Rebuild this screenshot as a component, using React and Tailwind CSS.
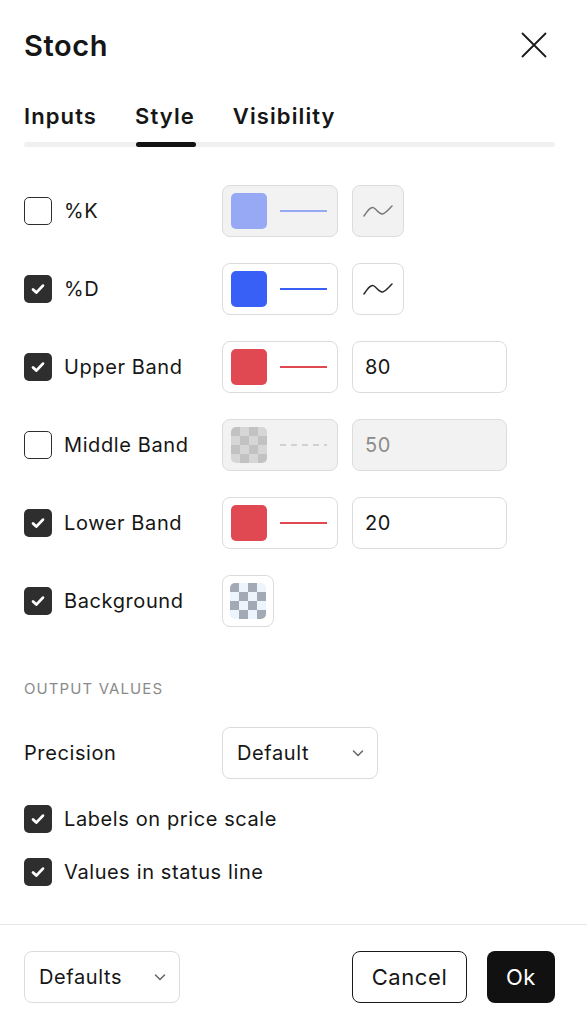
import React from "react";

const font = { fontFamily: "Inter, 'Noto Sans', sans-serif" };

function Check({ checked }) {
  if (!checked) {
    return <div className="w-[28px] h-[28px] rounded-[5px] border-[1.5px] border-[#2e2e2e] bg-white shrink-0" />;
  }
  return (
    <div className="w-[28px] h-[28px] rounded-[5px] bg-[#2e2e2e] flex items-center justify-center shrink-0">
      <svg width="18" height="18" viewBox="0 0 16 16" fill="none">
        <path d="M3.6 8.4l2.9 2.8 5.9-6.2" stroke="white" strokeWidth="2.5" strokeLinecap="round" strokeLinejoin="round" />
      </svg>
    </div>
  );
}

function Checker({ light, dark }) {
  const cells = [];
  for (let r = 0; r < 4; r++) {
    for (let c = 0; c < 4; c++) {
      cells.push(
        <div key={r * 4 + c} style={{ background: (r + c) % 2 === 0 ? dark : light }} />
      );
    }
  }
  return <div className="w-[36px] h-[36px] rounded-[5px] overflow-hidden grid grid-cols-4 grid-rows-4">{cells}</div>;
}

function ColorButton({ color, line, disabled, dashed }) {
  return (
    <div
      className={
        "w-[116px] h-[52px] rounded-[8px] border border-[#dcdcdc] flex items-center pl-[8px] gap-[13px] " +
        (disabled ? "bg-[#f2f2f2]" : "bg-white")
      }
    >
      {color ? (
        <div className="w-[36px] h-[36px] rounded-[5px]" style={{ background: color }} />
      ) : (
        <Checker light="#d6d6d6" dark="#c2c2c2" />
      )}
      {dashed ? (
        <svg width="47" height="2" viewBox="0 0 47 2">
          <line x1="0" y1="1" x2="47" y2="1" stroke="#c6c6c6" strokeWidth="1.5" strokeDasharray="6 5" />
        </svg>
      ) : (
        <div className="w-[47px] h-[1.5px]" style={{ background: line }} />
      )}
    </div>
  );
}

function Wave({ disabled }) {
  return (
    <div
      className={
        "w-[52px] h-[52px] rounded-[8px] border border-[#dcdcdc] flex items-center justify-center " +
        (disabled ? "bg-[#f2f2f2]" : "bg-white")
      }
    >
      <svg width="30" height="14" viewBox="0 0 30 14" fill="none">
        <path
          d="M1 12 C5 6 8 2 11 4 C14 6 16 10 19 10 C22 10 25 6 29 2"
          stroke={disabled ? "#7a7a7a" : "#2a2a2a"}
          strokeWidth="1.5"
          strokeLinecap="round"
          strokeLinejoin="round"
        />
      </svg>
    </div>
  );
}

function NumInput({ value, disabled }) {
  return (
    <div
      className={
        "w-[155px] h-[52px] rounded-[8px] border border-[#dcdcdc] flex items-center px-[12px] text-[20px] tracking-[0.5px] " +
        (disabled ? "bg-[#f2f2f2] text-[#8c8c8c]" : "bg-white text-[#161616]")
      }
    >
      {value}
    </div>
  );
}

function Chevron() {
  return (
    <svg width="14" height="14" viewBox="0 0 14 14" fill="none">
      <path d="M2.5 5l4.5 4.5L11.5 5" stroke="#6b6b6b" strokeWidth="1.6" strokeLinecap="round" strokeLinejoin="round" />
    </svg>
  );
}

function Select({ label }) {
  return (
    <div className="w-[156px] h-[52px] rounded-[8px] border border-[#dcdcdc] bg-white flex items-center justify-between pl-[14px] pr-[12px] text-[20px] tracking-[0.6px] text-[#161616]">
      <span>{label}</span>
      <Chevron />
    </div>
  );
}

function Row({ checked, label, children }) {
  return (
    <div className="flex items-center h-[52px]">
      <div className="w-[198px] flex items-center gap-[12px]">
        <Check checked={checked} />
        <span className="text-[20px] tracking-[0.6px] text-[#161616]">{label}</span>
      </div>
      <div className="flex items-center gap-[14px]">{children}</div>
    </div>
  );
}

export default function App() {
  return (
    <div className="w-[587px] h-[1024px] bg-white flex flex-col" style={font}>
      <div className="h-[90px] pl-6 pr-[40px] flex items-center justify-between">
        <h1 className="text-[29px] font-semibold tracking-[0.6px] text-[#161616] leading-none">Stoch</h1>
        <svg width="26" height="26" viewBox="0 0 26 26" fill="none">
          <path d="M1.5 1.5l23 23M24.5 1.5l-23 23" stroke="#1a1a1a" strokeWidth="1.8" strokeLinecap="round" />
        </svg>
      </div>

      <div className="pl-6 pr-8">
        <div className="h-[52px] flex items-center gap-[38px] text-[22px] font-semibold tracking-[1.1px] text-[#161616]">
          <span>Inputs</span>
          <span>Style</span>
          <span>Visibility</span>
        </div>
        <div className="relative h-[5px] rounded-full bg-[#f0f0f0]">
          <div className="absolute left-[112px] top-0 w-[60px] h-[5px] rounded-full bg-[#131313]" />
        </div>
      </div>

      <div className="pl-6 pr-8 mt-[38px] flex flex-col gap-[26px]">
        <Row checked={false} label="%K">
          <ColorButton color="#97a9f5" line="#97a9f5" disabled />
          <Wave disabled />
        </Row>
        <Row checked label="%D">
          <ColorButton color="#3860f6" line="#3860f6" />
          <Wave />
        </Row>
        <Row checked label="Upper Band">
          <ColorButton color="#e04852" line="#e04852" />
          <NumInput value="80" />
        </Row>
        <Row checked={false} label="Middle Band">
          <ColorButton disabled dashed />
          <NumInput value="50" disabled />
        </Row>
        <Row checked label="Lower Band">
          <ColorButton color="#e04852" line="#e04852" />
          <NumInput value="20" />
        </Row>
        <Row checked label="Background">
          <div className="w-[52px] h-[52px] rounded-[8px] border border-[#dcdcdc] bg-white flex items-center justify-center">
            <Checker light="#eef4fc" dark="#a3aab5" />
          </div>
        </Row>
      </div>

      <div className="pl-6 pr-8 mt-[52px] text-[15px] leading-[20px] text-[#8a8a8a] tracking-[1.1px]">OUTPUT VALUES</div>

      <div className="pl-6 pr-8 mt-[28px] flex items-center h-[52px]">
        <span className="w-[198px] text-[20px] tracking-[0.6px] text-[#161616]">Precision</span>
        <Select label="Default" />
      </div>

      <div className="pl-6 pr-8 mt-[22px] flex flex-col gap-[17px]">
        <div className="flex items-center gap-[12px] h-[36px]">
          <Check checked />
          <span className="text-[20px] tracking-[0.6px] text-[#161616]">Labels on price scale</span>
        </div>
        <div className="flex items-center gap-[12px] h-[36px]">
          <Check checked />
          <span className="text-[20px] tracking-[0.6px] text-[#161616]">Values in status line</span>
        </div>
      </div>

      <div className="mt-[34px] border-t border-[#e6e6e6]" />

      <div className="pl-6 pr-8 mt-[26px] flex items-center justify-between">
        <Select label="Defaults" />
        <div className="flex items-center gap-[20px]">
          <button className="w-[115px] h-[52px] rounded-[8px] border-[1.5px] border-[#1a1a1a] bg-white text-[22px] tracking-[0.6px] text-[#161616]">
            Cancel
          </button>
          <button className="w-[68px] h-[52px] rounded-[8px] bg-[#111111] text-[22px] tracking-[0.6px] text-white">Ok</button>
        </div>
      </div>
    </div>
  );
}
